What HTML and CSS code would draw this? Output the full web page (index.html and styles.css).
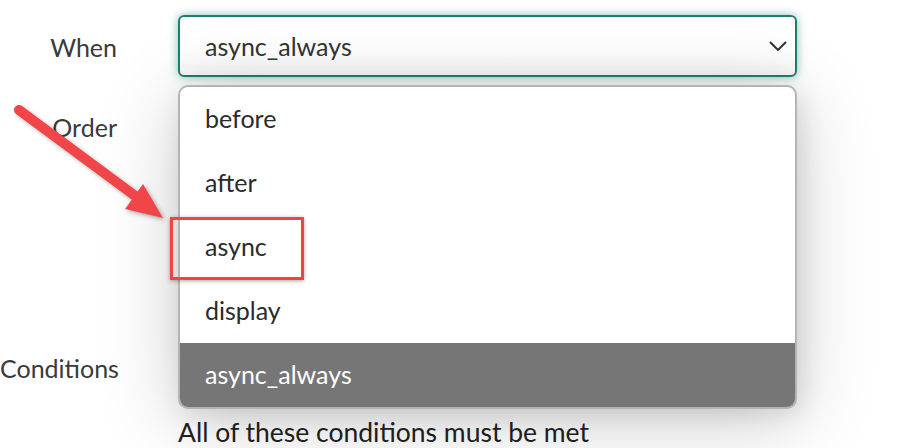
FILE: index.html
```html
<!DOCTYPE html>
<html lang="en">
<head>
<meta charset="utf-8">
<title>Hook settings</title>
<link rel="stylesheet" href="styles.css">
</head>
<body>
<div class="page">
  <form class="form">
    <label class="label row-when">When</label>
    <div class="select row-when">
      <span class="select-value">async_always</span>
      <svg class="chevron" width="18" height="10" viewBox="0 0 18 10"><path d="M1 1 L9 9 L17 1" fill="none" stroke="#333" stroke-width="2"/></svg>
    </div>

    <label class="label row-order">Order</label>
    <div class="input row-order"></div>

    <label class="label row-cond">Conditions</label>
    <div class="cond row-cond">
      <div class="cond-box"></div>
      <p class="cond-text">All of these conditions must be met</p>
    </div>
  </form>

  <ul class="menu">
    <li class="menu-item">before</li>
    <li class="menu-item">after</li>
    <li class="menu-item">async</li>
    <li class="menu-item">display</li>
    <li class="menu-item is-active">async_always</li>
  </ul>

  <div class="highlight-box"></div>
  <svg class="arrow" width="180" height="240" viewBox="0 0 180 240">
    <line x1="19" y1="110" x2="138" y2="198" stroke="#f0464a" stroke-width="10" stroke-linecap="round"/>
    <polygon points="163,218 125,209 143,184" fill="#f0464a"/>
  </svg>
</div>
</body>
</html>
```
FILE: styles.css
```css
* { box-sizing: border-box; }
html, body { margin: 0; padding: 0; background: #fff; }
body {
  font-family: Lato, "Source Sans Pro", "Noto Sans", sans-serif;
  font-size: 25px;
  color: #333;
  overflow: hidden;
  width: 905px;
  height: 448px;
}
.page { position: relative; width: 905px; height: 448px; }

.form {
  display: grid;
  grid-template-columns: 117px 619px;
  column-gap: 61px;
  padding-top: 15px;
  align-items: start;
}
.label {
  text-align: right;
  height: 62px;
  line-height: 64px;
  white-space: nowrap;
  color: #3a3a3a;
}
.row-order { margin-top: 18px; }
.row-cond { margin-top: 188px; }

.select {
  height: 62px;
  border: 2px solid #1f7f6f;
  border-radius: 6px;
  background: linear-gradient(#fff 60%, #f5f5f5);
  box-shadow: 0 0 10px rgba(31, 127, 111, 0.5);
  display: flex;
  align-items: center;
  justify-content: space-between;
  padding: 0 8px 0 25px;
}
.select-value { line-height: 1; }
.chevron { display: block; }

.input {
  height: 62px;
  border: 2px solid #999;
  border-radius: 6px;
}

.label.row-cond { line-height: 46px; height: 46px; }
.cond-box { height: 46px; }
.cond-text {
  margin: 24px 0 0;
  color: #222;
  font-size: 26.5px;
  line-height: 34px;
  white-space: nowrap;
}

.menu {
  position: absolute;
  left: 178px;
  top: 85px;
  width: 619px;
  margin: 0;
  padding: 0;
  list-style: none;
  background: #fff;
  border: 2px solid #b4b4b4;
  border-radius: 10px;
  overflow: hidden;
  box-shadow: 0 12px 80px rgba(0, 0, 0, 0.2), 4px 6px 24px rgba(0, 0, 0, 0.1);
}
.menu-item {
  height: 64px;
  line-height: 62px;
  padding-left: 25px;
  color: #2b2b2b;
}
.menu-item.is-active { background: #767676; color: #fff; }

.highlight-box {
  position: absolute;
  left: 170px;
  top: 217px;
  width: 134px;
  height: 63px;
  border: 3px solid #ef4446;
  box-shadow: 0 1px 4px rgba(0, 0, 0, 0.35);
}
.arrow {
  position: absolute;
  left: 0;
  top: 0;
  filter: drop-shadow(2px 2px 2px rgba(0, 0, 0, 0.3));
}
```
